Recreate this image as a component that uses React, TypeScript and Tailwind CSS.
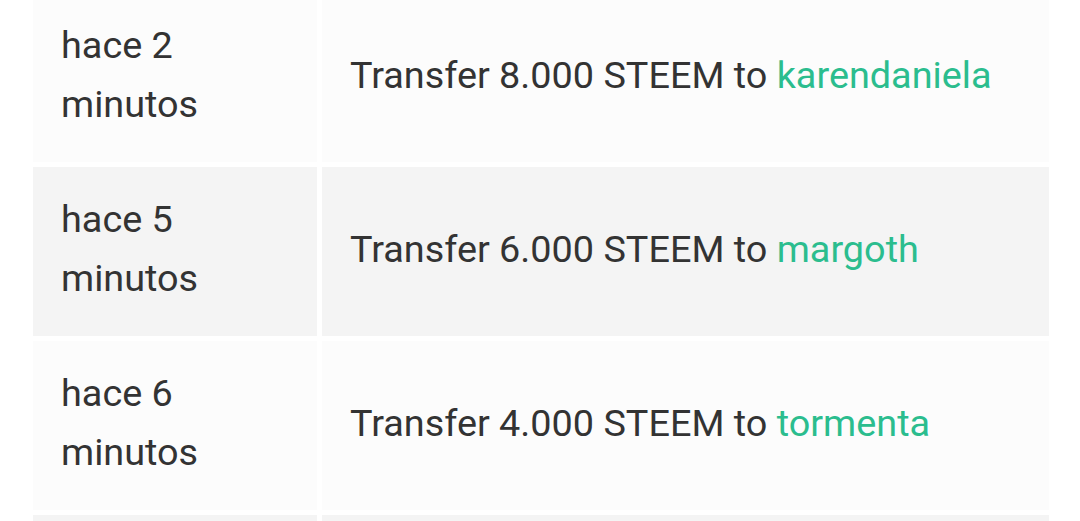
import React from "react";

const rows = [
  { n: "2", amt: "8.000", to: "karendaniela", bg: "bg-[#fcfcfc]" },
  { n: "5", amt: "6.000", to: "margoth", bg: "bg-[#f4f4f4]" },
  { n: "6", amt: "4.000", to: "tormenta", bg: "bg-[#fcfcfc]" },
];

export default function App() {
  return (
    <div
      className="w-[1080px] h-[521px] overflow-hidden bg-white text-[#333333]"
      style={{ fontFamily: "Roboto, 'Noto Sans', sans-serif" }}
    >
      <div className="-mt-[7px] ml-[33px] grid grid-cols-[284px_727px] gap-x-[5px] gap-y-[5px]">
        {rows.map((r, i) => (
          <React.Fragment key={i}>
            <div className={`${r.bg} h-[169px] flex items-center pl-[28px] pb-[5px] text-[37.8px] leading-[59px]`}>
              <div>
                hace {r.n}
                <br />
                minutos
              </div>
            </div>
            <div className={`${r.bg} h-[169px] flex items-center pl-[28px] pb-[5px] text-[37.8px] leading-[59px]`}>
              <div>
                Transfer {r.amt} STEEM to{" "}
                <span className="text-[#2bbd8e]">{r.to}</span>
              </div>
            </div>
          </React.Fragment>
        ))}
        <div className="bg-[#f4f4f4] h-[169px]" />
        <div className="bg-[#f4f4f4] h-[169px]" />
      </div>
    </div>
  );
}
